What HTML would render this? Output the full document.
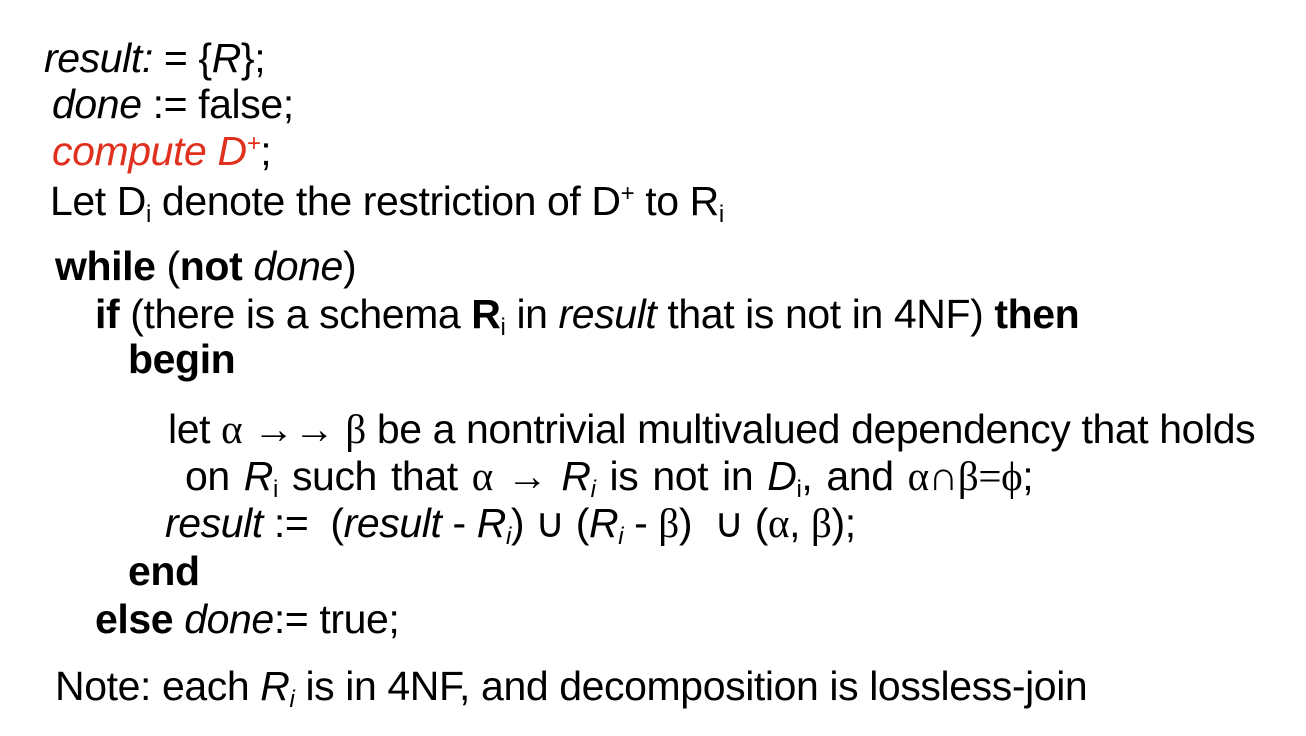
<!DOCTYPE html>
<html><head><meta charset="utf-8"><style>
body{margin:0;width:1306px;height:736px;background:#fff;position:relative;overflow:hidden;font-family:"Liberation Sans",Arial,sans-serif;color:#000}
.l{position:absolute;font-size:41px;line-height:41px;white-space:nowrap;letter-spacing:-0.4px}
i{font-style:italic}
sub{font-size:24px;vertical-align:-7px;line-height:0}
sup{font-size:24px;vertical-align:14px;line-height:0}
.s{font-family:"Liberation Serif",serif}
</style></head><body>
<div class="l" style="left:44px;top:38px"><i>result:</i> = {<i>R</i>};</div>
<div class="l" style="left:52px;top:84px"><i>done</i> := false;</div>
<div class="l" style="left:52px;top:131px;color:#e0301e"><i>compute D<sup>+</sup></i><span style="color:#000">;</span></div>
<div class="l" style="left:50px;top:181px">Let D<sub>i</sub> denote the restriction of D<sup>+</sup> to R<sub>i</sub></div>
<div class="l" style="left:55px;top:246px"><b>while</b> (<b>not</b> <i>done</i>)</div>
<div class="l" style="left:95px;top:294px"><b>if</b> (there is a schema <b>R</b><sub>i</sub> in <i>result</i> that is not in 4NF) <b>then</b></div>
<div class="l" style="left:128px;top:339px"><b>begin</b></div>
<div class="l" style="left:168px;top:409px">let <span class="s">α</span> →→ <span class="s">β</span> be a nontrivial multivalued dependency that holds</div>
<div class="l" style="left:185px;top:456px;word-spacing:3px">on <i>R</i><sub>i</sub> such that <span class="s">α</span> → <i>R<sub>i</sub></i> is not in <i>D</i><sub>i</sub>, and <span class="s">α∩β=ϕ</span>;</div>
<div class="l" style="left:165px;top:503px"><i>result</i> :=&nbsp; (<i>result</i> - <i>R<sub>i</sub></i>) ∪ (<i>R<sub>i</sub></i> - <span class="s">β</span>)&nbsp; ∪ (<span class="s">α</span>, <span class="s">β</span>);</div>
<div class="l" style="left:128px;top:551px"><b>end</b></div>
<div class="l" style="left:95px;top:599px"><b>else</b> <i>done</i>:= true;</div>
<div class="l" style="left:55px;top:666px">Note: each <i>R<sub>i</sub></i> is in 4NF, and decomposition is lossless-join</div>
</body></html>
